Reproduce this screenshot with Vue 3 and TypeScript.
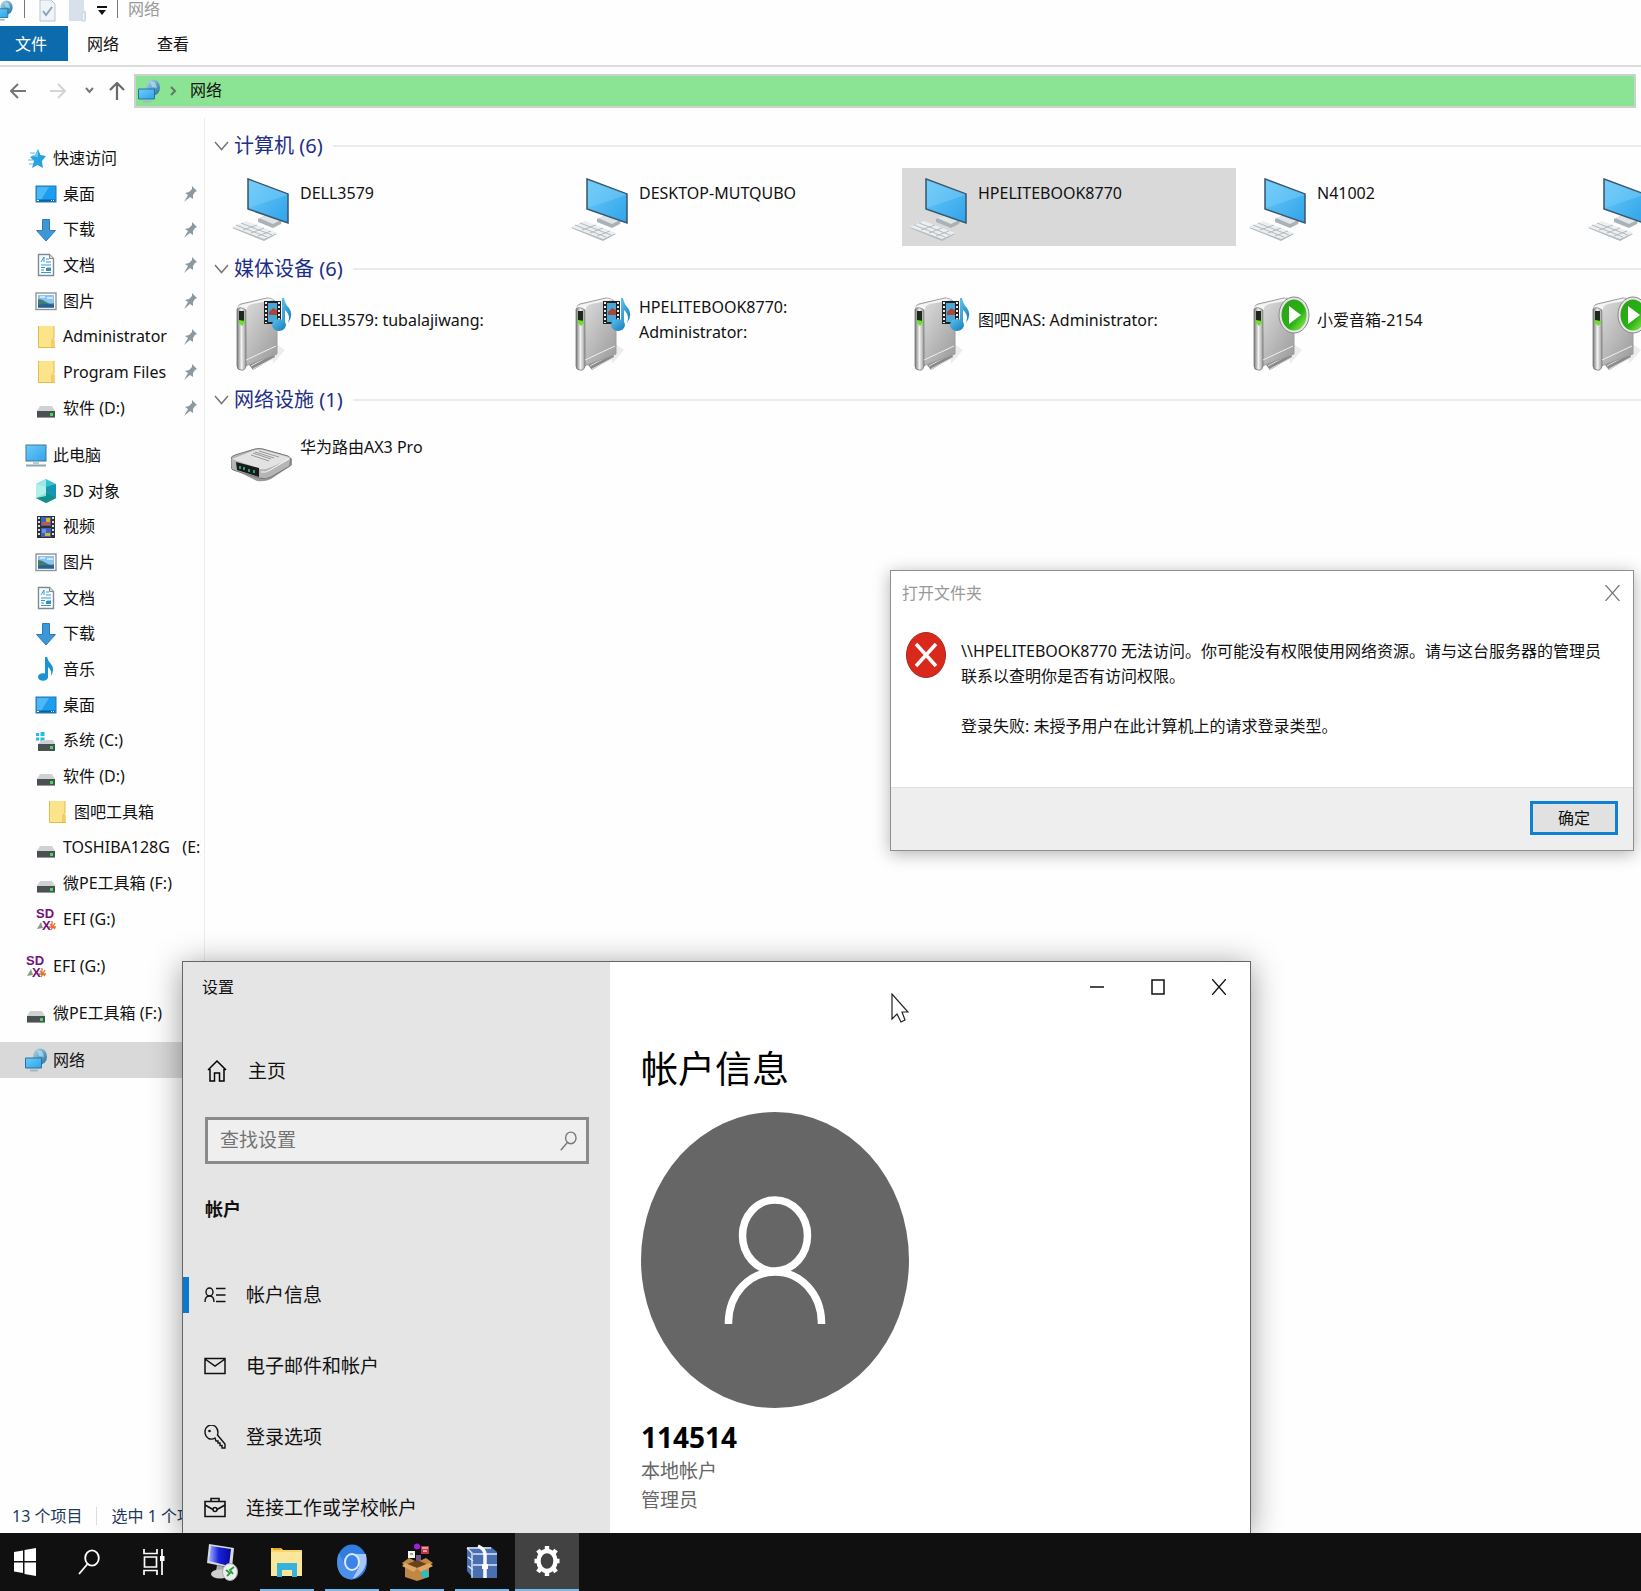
<script setup lang="ts">
import { ref } from 'vue'

interface TreeItem { icon: string; label: string; level: number; pinned?: boolean; active?: boolean }
interface Tile { icon: string; lines: string[]; selected?: boolean }
interface Group { title: string; tiles: Tile[] }
interface MenuItem { icon: string; label: string; active?: boolean }
interface TaskApp { icon: string; label: string; state: '' | 'running' | 'active' }

const tree: TreeItem[][] = [
  [
    { icon: 'star', label: '快速访问', level: 0 },
    { icon: 'desktop', label: '桌面', level: 1, pinned: true },
    { icon: 'download', label: '下载', level: 1, pinned: true },
    { icon: 'document', label: '文档', level: 1, pinned: true },
    { icon: 'picture', label: '图片', level: 1, pinned: true },
    { icon: 'folder', label: 'Administrator', level: 1, pinned: true },
    { icon: 'folder', label: 'Program Files', level: 1, pinned: true },
    { icon: 'drive', label: '软件 (D:)', level: 1, pinned: true },
  ],
  [
    { icon: 'computer', label: '此电脑', level: 0 },
    { icon: 'cube', label: '3D 对象', level: 1 },
    { icon: 'video', label: '视频', level: 1 },
    { icon: 'picture', label: '图片', level: 1 },
    { icon: 'document', label: '文档', level: 1 },
    { icon: 'download', label: '下载', level: 1 },
    { icon: 'music', label: '音乐', level: 1 },
    { icon: 'desktop', label: '桌面', level: 1 },
    { icon: 'system', label: '系统 (C:)', level: 1 },
    { icon: 'drive', label: '软件 (D:)', level: 1 },
    { icon: 'folder', label: '图吧工具箱', level: 2 },
    { icon: 'drive', label: 'TOSHIBA128G   (E:)', level: 1 },
    { icon: 'drive', label: '微PE工具箱 (F:)', level: 1 },
    { icon: 'sd', label: 'EFI (G:)', level: 1 },
  ],
  [{ icon: 'sd', label: 'EFI (G:)', level: 0 }],
  [{ icon: 'drive', label: '微PE工具箱 (F:)', level: 0 }],
  [{ icon: 'network', label: '网络', level: 0, active: true }],
]

const groups: Group[] = [
  {
    title: '计算机 (6)',
    tiles: [
      { icon: 'tile-pc', lines: ['DELL3579'] },
      { icon: 'tile-pc', lines: ['DESKTOP-MUTQUBO'] },
      { icon: 'tile-pc', lines: ['HPELITEBOOK8770'], selected: true },
      { icon: 'tile-pc', lines: ['N41002'] },
      { icon: 'tile-pc', lines: [] },
    ],
  },
  {
    title: '媒体设备 (6)',
    tiles: [
      { icon: 'tile-media', lines: ['DELL3579: tubalajiwang:'] },
      { icon: 'tile-media', lines: ['HPELITEBOOK8770:', 'Administrator:'] },
      { icon: 'tile-media', lines: ['图吧NAS: Administrator:'] },
      { icon: 'tile-play', lines: ['小爱音箱-2154'] },
      { icon: 'tile-play', lines: [] },
    ],
  },
  { title: '网络设施 (1)', tiles: [{ icon: 'tile-router', lines: ['华为路由AX3 Pro'] }] },
]

const menu: MenuItem[] = [
  { icon: 'account', label: '帐户信息', active: true },
  { icon: 'mail', label: '电子邮件和帐户' },
  { icon: 'key', label: '登录选项' },
  { icon: 'briefcase', label: '连接工作或学校帐户' },
]

const apps: TaskApp[] = [
  { icon: 'remote', label: '远程桌面', state: '' },
  { icon: 'explorer', label: '文件资源管理器', state: 'running' },
  { icon: 'chromium', label: 'Chromium', state: 'running' },
  { icon: 'toolbox', label: '图吧工具箱', state: 'running' },
  { icon: 'archive', label: '压缩', state: 'running' },
  { icon: 'gear', label: '设置', state: 'active' },
]

const query = ref('')
</script>

<template>
  <svg class="sprite" aria-hidden="true">
    <defs>
      <linearGradient id="g-screen" x1="0" y1="0" x2="1" y2="1"><stop offset="0" stop-color="#6fcbf7" /><stop offset="1" stop-color="#2ea3ea" /></linearGradient>
      <linearGradient id="g-globe" x1="0" y1="0" x2="1" y2="1"><stop offset="0" stop-color="#b5dcec" /><stop offset="1" stop-color="#1d6f9f" /></linearGradient>
      <linearGradient id="g-metal" x1="0" y1="0" x2="1" y2="1"><stop offset="0" stop-color="#e4e4e4" /><stop offset="1" stop-color="#989898" /></linearGradient>
      <linearGradient id="g-edge" x1="0" y1="0" x2="1" y2="0"><stop offset="0" stop-color="#777" /><stop offset=".5" stop-color="#f2f2f2" /><stop offset="1" stop-color="#999" /></linearGradient>
      <linearGradient id="g-green" x1="0" y1="0" x2="1" y2="1"><stop offset="0" stop-color="#2f9e1c" /><stop offset=".6" stop-color="#27b312" /><stop offset="1" stop-color="#a3f25c" /></linearGradient>
      <linearGradient id="g-note" x1="0" y1="0" x2="1" y2="1"><stop offset="0" stop-color="#5cc3ee" /><stop offset="1" stop-color="#1479b8" /></linearGradient>
      <linearGradient id="g-crt" x1="0" y1="0" x2="1" y2="0"><stop offset="0" stop-color="#9fb4ff" /><stop offset=".45" stop-color="#1a22d8" /><stop offset="1" stop-color="#0508a0" /></linearGradient>
    </defs>
    <symbol id="star" viewBox="0 0 22 24"><path d="M13 3l2.500 6 5.500 1-4 5 1 7-5.500-3-5.500 3 2-7-4-4 5-2z" fill="#2aa3dd" /><path d="M13 3l0 8-7-1 4-1z" fill="#6bcaf0" /><path d="M5 7h5M3 14h5M4 18h4" stroke="#63b9e2" /></symbol>
    <symbol id="desktop" viewBox="0 0 22 24"><rect x="1" y="4" width="20" height="16" fill="#1c9ef0" stroke="#2277ad" /><path d="M2 5h12L6 18H2z" fill="#4db7f8" /><path d="M2 18.500h18" stroke="#0e5f9c" stroke-width="2" /><path d="M2 18.500h2M16 18.500h1M18 18.500h1" stroke="#fff" /></symbol>
    <symbol id="download" viewBox="0 0 22 24"><path d="M7.500 1.500h7v11h6L11 23 1.500 12.500h6z" fill="#3c96d8" stroke="#2b7cb8" /></symbol>
    <symbol id="document" viewBox="0 0 22 24"><path d="M3.500 1.500h11l4 4v17h-15z" fill="#fff" stroke="#7e8a90" stroke-width="1.400" /><path d="M14.500 1.500v4h4" fill="#ddd" stroke="#7e8a90" /><path d="M6 9l3-5v5M11 6h3M11 9h5M6 12h10M6 14.500h4M12 15h4M6 17h3M6 19.500h10" stroke="#2a9ad6" fill="none" /><path d="M11 15h5v3h-5z" fill="#3e8bb0" /></symbol>
    <symbol id="picture" viewBox="0 0 22 24"><rect x="1" y="4" width="20" height="16.500" fill="#fff" stroke="#8b9499" stroke-width="1.400" /><rect x="3" y="6" width="16" height="12.500" fill="#8cc4f0" /><path d="M3 10q4 0 8 3t8 1v4.500H3z" fill="#3f7d72" /><path d="M3 16q8-2 16 0v2.500H3z" fill="#2c5e96" /><path d="M5 8h5M12 9h6" stroke="#dff0fc" stroke-width="1.500" /></symbol>
    <symbol id="folder" viewBox="0 0 22 24"><path d="M3 1h16v13h1v9H3z" fill="#fce48a" /><path d="M3.500 1v21.500H20M19 1v12q-2 1-2 3v6" stroke="#e2bb48" fill="none" /><path d="M17.500 15h2v7h-2z" fill="#f3cf62" /></symbol>
    <symbol id="drive" viewBox="0 0 22 24"><path d="M5 10h12l3 5H2z" fill="#cfd2d2" /><rect x="2" y="15" width="18" height="7" fill="#4b5052" /><path d="M2 21.500h18" stroke="#999" /><rect x="15" y="17" width="3" height="3" fill="#3ee05a" /></symbol>
    <symbol id="system" viewBox="0 0 22 24"><path d="M1 4h3v3H1zM5.500 3h4v4h-4zM1 8.500h3v3H1zM5.500 8.500h4v4h-4z" fill="#21bce6" /><path d="M7 11h11l2 4H3z" fill="#cfd2d2" /><rect x="3" y="15" width="17" height="7" fill="#4b5052" /><rect x="15" y="17" width="3" height="3" fill="#3ee05a" /></symbol>
    <symbol id="computer" viewBox="0 0 22 24"><rect x="1" y="2" width="20" height="16" fill="url(#g-screen)" stroke="#3f7896" /><path d="M8 19h6v2H8z" fill="#b7cbd5" /><path d="M1 22.500h20" stroke="#8fa5b0" stroke-width="2" /></symbol>
    <symbol id="cube" viewBox="0 0 22 24"><path d="M11 0l10 5v14l-10 5L1 19V5z" fill="#35c3cc" /><path d="M11 0v14L1 19V5z" fill="#9be8ea" /><path d="M11 8l10-3v14l-10 5z" fill="#1796b4" /><path d="M1 19l10-5 10 5-10 5z" fill="#128f8b" /><path d="M1 5l10 3v9L1 19z" fill="#b8f1ea" opacity=".8" /></symbol>
    <symbol id="video" viewBox="0 0 22 24"><rect x="2" y="1" width="18" height="22" fill="#303030" /><path d="M4 2v20M18 2v20" stroke="#ddd" stroke-width="2" stroke-dasharray="2 2" /><path d="M6 2h10v9H6zM6 13h10v9H6z" fill="#3d62c4" /><path d="M7 7h8v3H7z" fill="#c65a3a" /><path d="M11 3h4v4h-4zM10 18h5v3h-5z" fill="#d3b630" /><path d="M7 14h4v4H7z" fill="#6a92ea" /></symbol>
    <symbol id="music" viewBox="0 0 22 24"><ellipse cx="8" cy="20" rx="5" ry="3.800" fill="#1b93d3" /><path d="M10 0h2q1 4 4 7 4 5 0 12 1-6-3-9v11h-3z" fill="#1b93d3" /></symbol>
    <symbol id="network" viewBox="0 0 22 24"><ellipse cx="15" cy="8.500" rx="7" ry="8" fill="url(#g-globe)" /><path d="M12 2l5 1 2 6-5-1z" fill="#b7dff0" opacity=".7" /><path d="M.500 10h16v10H.500z" fill="url(#g-screen)" stroke="#2773a5" /><path d="M5 21.500h8v2H5z" fill="#a9b7bf" /></symbol>
    <symbol id="pin" viewBox="0 0 14 16"><path d="M9 0l5 5-2 1-2 3v4l-3-2-6 5 4-7-3-2 4-1 3-3z" fill="#8b9aa0" /></symbol>

    <symbol id="tile-pc" viewBox="0 0 62 78"><path d="M27 51l9-4 15 5-1 4-8 4-15-6z" fill="#aab2b7" /><path d="M28 50l9-3 13 5-8 4z" fill="#dfe4e6" /><path d="M39 46l5 2v5l-5-2z" fill="#d9dfe2" /><path d="M17 11l40 15v29L17 41z" fill="url(#g-screen)" stroke="#39566a" stroke-width="1.500" /><path d="M18 40l38-13v-1L18 12z" fill="#7dd0fa" opacity=".45" /><path d="M1 60l14-6 31 12-13 7z" fill="#b4babd" /><path d="M1 59l14-6 31 12-13 6z" fill="#eceeef" /><path d="M5 57l31 12M10 55l31 12M12 62l14-5M20 65l13-5M27 68l13-5" stroke="#b4bbbf" stroke-width="1" /></symbol>
    <symbol id="tile-body" viewBox="0 0 62 82"><path d="M40 45l14 10-12 14z" fill="#000" opacity=".07" /><path d="M18 70l24-14 2 6-22 13z" fill="#8b8b8b" /><path d="M20 71l22-12M22 74l21-11" stroke="#e2e2e2" /><path d="M7 12q0-2 3-3l26-6q7 0 10 6v50L14 71z" fill="url(#g-metal)" stroke="#9c9c9c" /><path d="M16 13q1-3 5-4l22-4-3-1q-3-1-6 0l-24 6q-4 1-4 5v57q0 3 4 3 3 0 4-3z" fill="#f5f5f5" /><path d="M6 14q3-3 9 1v56q-1 5-5 4-4 0-4-4z" fill="url(#g-edge)" stroke="#777" stroke-width=".8" /><path d="M8 16h5v12H8z" fill="#1c2a1c" /><path d="M8 25l6 1v2l-3 3-3-3z" fill="#6fe02a" /><path d="M15 65l30-14" stroke="#eee" /></symbol>
    <symbol id="tile-media" viewBox="0 0 62 82"><use href="#tile-body" width="62" height="82" /><rect x="33" y="6" width="17" height="23" fill="#222" /><path d="M35 7v21M48 7v21" stroke="#eee" stroke-width="2" stroke-dasharray="2 2" /><rect x="37" y="8" width="9" height="19" fill="#49a8d8" /><path d="M38 17l4-4 4 2v5h-8z" fill="#a9473a" /><path d="M51 3h2q1 6 5 10 5 7-1 15 3-8-3-13v15h-3z" fill="url(#g-note)" /><ellipse cx="48" cy="30" rx="7" ry="6" fill="url(#g-note)" /></symbol>
    <symbol id="tile-play" viewBox="0 0 62 82"><use href="#tile-body" width="62" height="82" /><ellipse cx="46" cy="20" rx="15" ry="18" fill="#e6e6e6" stroke="#888" /><ellipse cx="46" cy="20" rx="12.500" ry="15.500" fill="url(#g-green)" /><path d="M41 11v18l12-9z" fill="#fff" /></symbol>
    <symbol id="tile-router" viewBox="0 0 62 78"><path d="M2 47l24 12q8 1 14-2l21-14v-7L40 48z" fill="#555" opacity=".6" /><path d="M0 37q0-3 4-4l20-6q4-1 8 0l25 7q4 2 2 7v3L40 55q-5 3-12 1L2 48q-2-1-2-4z" fill="#b5b5b5" stroke="#777" /><path d="M1 37l23-9q4-1 8 0l25 7q3 1 0 3L38 46q-4 2-9 1z" fill="#e2e2e2" /><path d="M5 40l23 6v9L6 48z" fill="#151b1e" /><path d="M9 44v3M13 45v3M18 47v3M23 48v3" stroke="#3ec96a" stroke-width="1.500" /><path d="M24 30l19 6M28 29l20 6M20 33l18 6M22 31l18 6" stroke="#999" /><path d="M30 50q5 1 9-2l19-11" stroke="#fafafa" fill="none" /></symbol>

    <symbol id="home" viewBox="0 0 22 24"><path d="M2 11l9-9 9 9M4 10v12h4.500v-8h5v8H18V10" fill="none" stroke="#000" stroke-width="1.500" /></symbol>
    <symbol id="account" viewBox="0 0 22 24"><ellipse cx="5.500" cy="9" rx="3.500" ry="4" fill="none" stroke="#111" stroke-width="1.400" /><path d="M1 19q0-6 4.500-6t4.500 6M12 5.500h9.500M12 12h9.500M12 18.500h9.500" fill="none" stroke="#111" stroke-width="1.400" /></symbol>
    <symbol id="mail" viewBox="0 0 22 24"><path d="M1 4.500h20v15H1zM1 5l10 7 10-7" fill="none" stroke="#111" stroke-width="1.500" /></symbol>
    <symbol id="key" viewBox="0 0 22 24"><path d="M11 13q-3 2-6.500.5Q1 11 1 7t3-6q4-2 7.500.5Q15 5 13.500 10L21 19v4h-3v-2.500h-2V18h-2v-2h-2z" fill="none" stroke="#111" stroke-width="1.400" /><circle cx="5.500" cy="6" r="1.300" fill="#111" /></symbol>
    <symbol id="briefcase" viewBox="0 0 22 24"><path d="M1 5.500h20v15H1zM7 5V2.500h8V5M1 9l8 4.500M21 9l-8 4.500" fill="none" stroke="#111" stroke-width="1.600" /><circle cx="11" cy="13.500" r="2" fill="none" stroke="#111" stroke-width="1.500" /></symbol>
    <symbol id="search" viewBox="0 0 22 26"><ellipse cx="14" cy="9" rx="6.800" ry="7.600" fill="none" stroke="currentColor" stroke-width="1.800" /><path d="M9.500 15L1 25" stroke="currentColor" stroke-width="1.800" /></symbol>

    <symbol id="start" viewBox="0 0 22 28"><path d="M0 4l9-1.500V13H0zM10.500 2L22 0v13H10.500zM0 14.500h9V25l-9-1.500zM10.500 14.500H22V28l-11.500-2z" fill="#fff" /></symbol>
    <symbol id="taskview" viewBox="0 0 22 26"><path d="M1 0v4.500h13V0M1 26v-4.500h13V26M1.500 8h12v10h-12zM19 0v26" fill="none" stroke="#fff" stroke-width="1.700" /><path d="M17 7h4.500v5H17z" fill="#fff" /></symbol>
    <symbol id="remote" viewBox="0 0 34 38"><path d="M4 1l25 4-2 20L2 20z" fill="#d6d9df" /><path d="M6 3l20 3-2 17-20-5z" fill="url(#g-crt)" /><path d="M12 22l8 2v6l-9-2z" fill="#a9a9a9" /><ellipse cx="15" cy="31" rx="9" ry="4.500" fill="#cfcfcf" /><ellipse cx="25" cy="29" rx="7.500" ry="8.500" fill="#eee" stroke="#aaa" /><path d="M21 27l4 3-3 3M29 24l-4 3 3 4" stroke="#239f3c" stroke-width="1.800" fill="none" /></symbol>
    <symbol id="explorer" viewBox="0 0 34 38"><path d="M1 5h10l2 2h19v26H1z" fill="#f7d66a" /><path d="M1 9h31v24H1z" fill="#fbe79a" /><path d="M3 6h8" stroke="#e9a82d" stroke-width="2" /><path d="M7 20h20v14h-5v-7H12v7H7z" fill="#35b3dc" /></symbol>
    <symbol id="chromium" viewBox="0 0 34 38"><ellipse cx="17" cy="19" rx="15" ry="17.500" fill="#2f7de0" /><path d="M17 11h14q2 11-4 18-5 6-10 7l7-12z" fill="#a5c6f7" /><path d="M4 10l7 14q4 5 11 3l-5 9.500Q5 36 2.500 24 1.500 15 4 10z" fill="#4d8fe8" /><ellipse cx="17" cy="19" rx="8" ry="9" fill="#dceaff" /><ellipse cx="17" cy="19" rx="6" ry="7" fill="#3b83e4" /></symbol>
    <symbol id="toolbox" viewBox="0 0 34 38"><circle cx="17" cy="3.500" r="3" fill="#a020d8" /><path d="M21 3h8v8h-8z" fill="#b83a48" /><path d="M22 5h6M23 8h4" stroke="#fff" /><path d="M8 8h7v7H8z" fill="#f4f4f4" /><path d="M10 11h3" stroke="#555" /><path d="M16 12h5v6h-5z" fill="#715591" /><path d="M2 20l7-5 8 4 9-4 7 5-4 3v11l-12 4-12-4V23z" fill="#bf8845" /><path d="M5 22l12 3 12-3-12-5z" fill="#67421c" /><path d="M17 25l-3 4-12-6 3-3zM17 25l4 4 12-6-4-3z" fill="#dfa860" /><circle cx="25" cy="31" r="3.800" fill="#25bfc4" /></symbol>
    <symbol id="archive" viewBox="0 0 34 38"><path d="M2 4h24l6 5v26H8l-6-7z" fill="#4a6fb0" /><path d="M2 5l5 5v25M8 11h24M8 22h24M3 14l5 4M3 23l5 4M2 5h24" stroke="#dce6f7" stroke-width="1.400" fill="none" /><path d="M13 3q7 3 7 9v23" stroke="#f8fbff" stroke-width="3.500" fill="none" /><path d="M17 21h6v5h-6z" fill="#fff" /></symbol>
    <symbol id="gear" viewBox="0 0 34 38"><ellipse cx="17" cy="19" rx="8.500" ry="10" fill="none" stroke="#fff" stroke-width="4.400" /><path d="M17 4v5M17 29v5M4.500 19h4M25.500 19h4M8 8l3.500 5M22.500 25l3.500 5M26 8l-3.500 5M11.500 25L8 30" stroke="#fff" stroke-width="4.400" /></symbol>
  </svg>

  <div class="screen">
    <div class="desktop">
      <section class="explorer">
        <header class="quickbar">
          <svg class="qb-net"><use href="#network" /></svg>
          <i class="bar"></i>
          <svg class="qb-doc" viewBox="0 0 17 22"><path d="M1 0h11l4 4v17H1z" fill="#f0f4f8" stroke="#b9c5d3" /><path d="M4 11l3 4 6-8" fill="none" stroke="#8ea3bd" stroke-width="2" /></svg>
          <svg class="qb-dir" viewBox="0 0 17 22"><path d="M0 0h15v12h2v9H0z" fill="#d8e1eb" /><path d="M13 21v-8l3-2v10z" fill="#eef2f6" stroke="#c3cfdc" /></svg>
          <svg class="qb-drop" viewBox="0 0 10 10"><path d="M0 1h10" stroke="#111" stroke-width="2" /><path d="M1 4h8L5 9z" fill="#111" /></svg>
          <i class="bar"></i>
          <span class="qb-title">网络</span>
        </header>
        <nav class="ribbon">
          <button class="tab file" type="button">文件</button>
          <button class="tab" type="button">网络</button>
          <button class="tab" type="button">查看</button>
        </nav>
        <div class="addressbar">
          <button type="button" class="nav-btn back" aria-label="返回"><svg viewBox="0 0 16 16"><path d="M16 8H1M8 1L1 8l7 7" fill="none" stroke="#777" stroke-width="2" /></svg></button>
          <button type="button" class="nav-btn" aria-label="前进"><svg viewBox="0 0 16 16"><path d="M0 8h15M8 1l7 7-7 7" fill="none" stroke="#d5d5d5" stroke-width="2" /></svg></button>
          <button type="button" class="nav-btn recent" aria-label="最近"><svg viewBox="0 0 9 16"><path d="M1 5l3.500 4L8 5" fill="none" stroke="#777" stroke-width="2" /></svg></button>
          <button type="button" class="nav-btn up" aria-label="向上"><svg viewBox="0 0 16 18"><path d="M8 18V2M1 8l7-7 7 7" fill="none" stroke="#6a6a6a" stroke-width="2.200" /></svg></button>
          <div class="address">
            <svg class="addr-icon"><use href="#network" /></svg>
            <svg class="addr-chev" viewBox="0 0 8 12"><path d="M1 2l4 4-4 4" fill="none" stroke="#5e7a62" stroke-width="2" /></svg>
            <span>网络</span>
          </div>
        </div>

        <div class="body">
          <nav class="tree">
            <ul v-for="(group, g) in tree" :key="g">
              <li v-for="(item, i) in group" :key="i">
                <a href="#" :class="['node', 'level-' + item.level, { active: item.active }]">
                  <svg v-if="item.icon === 'sd'" class="node-icon sd" viewBox="0 0 22 24">
                    <path d="M2 22l4-7 2 6z" fill="#8c9a8c" /><path d="M15 17l5 5M20 16l-4 7M14 20h7M17 14v8" stroke="#e0702c" stroke-width="1.300" />
                    <text x="1" y="11">SD</text><text x="7" y="23">X</text>
                  </svg>
                  <svg v-else class="node-icon"><use :href="'#' + item.icon" /></svg>
                  <span>{{ item.label }}</span>
                  <svg v-if="item.pinned" class="pin"><use href="#pin" /></svg>
                </a>
              </li>
            </ul>
          </nav>
          <main class="content">
            <section v-for="group in groups" :key="group.title" class="group">
              <h2><svg viewBox="0 0 15 10"><path d="M1 1l6.500 7.500L14 1" fill="none" stroke="#777" stroke-width="1.500" /></svg>{{ group.title }}</h2>
              <div class="tiles">
                <button v-for="(tile, t) in group.tiles" :key="t" type="button" :class="['tile', tile.icon, { selected: tile.selected }]">
                  <svg class="tile-icon"><use :href="'#' + tile.icon" /></svg>
                  <span class="tile-text"><span v-for="line in tile.lines" :key="line">{{ line }}</span></span>
                </button>
              </div>
            </section>
          </main>
        </div>
        <footer class="status"><span>13 个项目</span><i></i><span>选中 1 个项目</span></footer>
      </section>

      <section class="dialog" role="alertdialog">
        <header>
          <span>打开文件夹</span>
          <button type="button" aria-label="关闭"><svg viewBox="0 0 14 16"><path d="M0 0l14 16M14 0L0 16" stroke="#777" stroke-width="1.200" /></svg></button>
        </header>
        <div class="dialog-body">
          <svg viewBox="0 0 40 46"><ellipse cx="20" cy="23" rx="19.500" ry="22.500" fill="#d9291c" stroke="#a8261e" /><path d="M10 12l20 22M30 12L10 34" stroke="#fff" stroke-width="3.500" /></svg>
          <div>
            <p>\\HPELITEBOOK8770 无法访问。你可能没有权限使用网络资源。请与这台服务器的管理员<br>联系以查明你是否有访问权限。</p>
            <p>登录失败: 未授予用户在此计算机上的请求登录类型。</p>
          </div>
        </div>
        <footer><button type="button">确定</button></footer>
      </section>

      <section class="settings">
        <aside>
          <div class="settings-title">设置</div>
          <a href="#" class="home"><svg><use href="#home" /></svg>主页</a>
          <label class="search">
            <input v-model="query" type="text" placeholder="查找设置" aria-label="查找设置">
            <svg><use href="#search" /></svg>
          </label>
          <h3>帐户</h3>
          <a v-for="item in menu" :key="item.label" href="#" :class="['menu-item', { active: item.active }]">
            <svg><use :href="'#' + item.icon" /></svg>{{ item.label }}
          </a>
        </aside>
        <div class="pane">
          <div class="caption">
            <button type="button" aria-label="最小化"><svg viewBox="0 0 14 16"><path d="M0 8h14" stroke="#111" stroke-width="1.500" /></svg></button>
            <button type="button" aria-label="最大化"><svg viewBox="0 0 14 16"><path d="M1 1h12v14H1z" fill="none" stroke="#111" stroke-width="1.500" /></svg></button>
            <button type="button" aria-label="关闭"><svg viewBox="0 0 14 16"><path d="M0 0l14 16M14 0L0 16" stroke="#111" stroke-width="1.400" /></svg></button>
          </div>
          <div class="profile">
            <h1>帐户信息</h1>
            <svg class="avatar" viewBox="0 0 268 296"><ellipse cx="134" cy="148" rx="134" ry="148" fill="#666" /><ellipse cx="134" cy="123.500" rx="32.500" ry="35.500" fill="none" stroke="#fff" stroke-width="7.500" /><path d="M87.500 212v-2C88 182 108 160 134 160s46 22 46.500 50v2" fill="none" stroke="#fff" stroke-width="7.500" /></svg>
            <strong>114514</strong>
            <p>本地帐户</p>
            <p>管理员</p>
          </div>
        </div>
      </section>

      <svg class="cursor" viewBox="0 0 18 30"><path d="M1 1v25l5-5 4 8 4-2-3-8h6z" fill="#fff" stroke="#222" stroke-width="1.200" /></svg>
    </div>

    <footer class="taskbar">
      <button type="button" class="start" aria-label="开始"><svg><use href="#start" /></svg></button>
      <button type="button" aria-label="搜索"><svg><use href="#search" /></svg></button>
      <button type="button" aria-label="任务视图"><svg><use href="#taskview" /></svg></button>
      <div class="apps">
        <button v-for="app in apps" :key="app.icon" type="button" :class="app.state" :aria-label="app.label">
          <svg><use :href="'#' + app.icon" /></svg>
        </button>
      </div>
    </footer>
  </div>
</template>

<style>
body {
  margin: 0;
  background: #fff;
}
</style>

<style scoped>
* {
  box-sizing: border-box;
}
.sprite {
  position: absolute;
  width: 0;
  height: 0;
}
.screen {
  display: flex;
  flex-direction: column;
  min-height: 100vh;
  font-family: "Noto Sans", "Noto Sans CJK SC", sans-serif;
  font-size: 16px;
  line-height: 25px;
  color: #111;
}
button {
  padding: 0;
  border: 0;
  background: none;
  font: inherit;
  color: inherit;
}
a {
  color: inherit;
  text-decoration: none;
}
ul, h1, h2, h3, p {
  margin: 0;
  padding: 0;
  list-style: none;
}
svg {
  flex: none;
  display: block;
}
.desktop {
  position: relative;
  flex: 1;
  display: flex;
  overflow: hidden;
}
.explorer {
  flex: 1;
  min-width: 0;
  display: flex;
  flex-direction: column;
  background: #fefefe;
}

.quickbar {
  display: flex;
  align-items: flex-start;
  height: 26px;
}
.quickbar .bar {
  width: 1px;
  height: 18px;
  background: #777;
}
.qb-net {
  width: 22px;
  height: 21px;
  margin: 0 10px 0 -8px;
}
.qb-doc {
  width: 17px;
  height: 22px;
  margin: 0 13px 0 14px;
}
.qb-dir {
  width: 17px;
  height: 22px;
}
.qb-drop {
  width: 10px;
  height: 10px;
  margin: 6px 10px 0 11px;
}
.qb-title {
  margin-left: 10px;
  color: #999;
  line-height: 18px;
}

.ribbon {
  display: flex;
  height: 41px;
  border-bottom: 2px solid #dcdcdc;
}
.tab {
  width: 70px;
  height: 35px;
  padding-top: 2px;
}
.tab.file {
  width: 68px;
  padding-right: 6px;
  background: #0b6bad;
  color: #fff;
}

.addressbar {
  display: flex;
  align-items: center;
  height: 51px;
  padding: 0 5px 4px 10px;
}
.nav-btn svg {
  width: 16px;
  height: 18px;
}
.nav-btn.back {
  margin-right: 24px;
}
.nav-btn.recent {
  margin: 0 15px 0 19px;
}
.nav-btn.recent svg {
  width: 9px;
}
.nav-btn.up {
  margin-right: 9px;
}
.address {
  flex: 1;
  display: flex;
  align-items: center;
  height: 34px;
  padding-left: 2px;
  border: 2px solid #ccd2cc;
  background: #8be494;
}
.addr-icon {
  width: 22px;
  height: 24px;
}
.addr-chev {
  width: 8px;
  height: 12px;
  margin: 0 12px 0 10px;
}

.body {
  flex: 1;
  display: flex;
}
.tree {
  flex: none;
  width: 205px;
  padding-top: 22px;
  border-right: 1px solid #ececec;
}
.tree ul {
  width: 201px;
  margin-bottom: 11px;
}
.tree li {
  height: 36px;
}
.tree li:nth-child(3n) {
  height: 35px;
}
.node {
  display: flex;
  align-items: center;
  gap: 6px;
  height: 100%;
  overflow: hidden;
  white-space: pre;
}
.node.active {
  background: #d9d9d9;
}
.level-0 {
  padding-left: 25px;
}
.level-1 {
  padding-left: 35px;
}
.level-2 {
  padding-left: 46px;
}
.node-icon {
  width: 22px;
  height: 24px;
}
.sd text {
  fill: #75107b;
  font: 700 13px "Liberation Sans", sans-serif;
}
.pin {
  width: 14px;
  height: 16px;
  margin: 0 4px 0 auto;
}

.content {
  flex: 1;
  min-width: 0;
  overflow: hidden;
  padding-top: 13px;
}
.group {
  margin-bottom: 8px;
}
.group h2 {
  display: flex;
  align-items: center;
  gap: 5px;
  margin-bottom: 7px;
  padding-left: 9px;
  color: #1e2f87;
  font-size: 20px;
  font-weight: 400;
  line-height: 30px;
}
.group h2::after {
  content: "";
  flex: 1;
  height: 2px;
  margin-left: 5px;
  background: #ebebeb;
}
.group h2 svg {
  width: 15px;
  height: 10px;
}
.tiles {
  display: grid;
  grid-template-columns: repeat(5, 334px);
  gap: 5px;
  padding-left: 19px;
}
.tile {
  display: flex;
  align-items: flex-start;
  gap: 7px;
  padding-left: 7px;
  text-align: left;
}
.tile.selected {
  background: #d9d9d9;
}
.tile-icon {
  width: 62px;
  height: 78px;
}
.tile-media,
.tile-play {
  padding-top: 4px;
}
.tile-media .tile-icon,
.tile-play .tile-icon {
  height: 82px;
}
.tile-text {
  display: flex;
  flex-direction: column;
  justify-content: center;
  height: 50px;
}

.status {
  display: flex;
  align-items: center;
  gap: 14px;
  height: 34px;
  padding-left: 12px;
  color: #1e395b;
}
.status i {
  width: 1px;
  height: 18px;
  background: #ddd;
}

.dialog {
  position: absolute;
  top: 570px;
  right: 7px;
  width: 744px;
  border: 1px solid #8f8f8f;
  background: #fff;
  box-shadow: 0 3px 16px rgba(0, 0, 0, 0.3);
}
.dialog header {
  display: flex;
  align-items: center;
  justify-content: space-between;
  height: 44px;
  padding: 0 13px 0 11px;
  color: #999;
}
.dialog header svg {
  width: 15px;
  height: 16px;
}
.dialog-body {
  display: flex;
  gap: 15px;
  height: 172px;
  padding: 17px 0 0 15px;
}
.dialog-body svg {
  width: 40px;
  height: 46px;
}
.dialog-body p {
  margin-bottom: 25px;
  white-space: nowrap;
}
.dialog-body p:first-child {
  margin-top: 7px;
}
.dialog footer {
  display: flex;
  justify-content: flex-end;
  height: 63px;
  padding: 13px 15px 0;
  border-top: 1px solid #dfdfdf;
  background: #eee;
}
.dialog footer button {
  width: 88px;
  height: 34px;
  border: 3px solid #1080d0;
  background: #e1e1e1;
}

.settings {
  position: absolute;
  top: 961px;
  bottom: 0;
  left: 182px;
  display: flex;
  width: 1069px;
  overflow: hidden;
  border: 1px solid #666;
  border-bottom: 0;
  background: #fff;
  box-shadow: 0 4px 30px rgba(0, 0, 0, 0.4);
}
.settings aside {
  flex: none;
  width: 427px;
  background: #e5e5e5;
  font-size: 19px;
}
.settings-title {
  padding: 13px 0 0 19px;
  font-size: 16px;
}
.home {
  display: flex;
  align-items: center;
  gap: 20px;
  margin-top: 55px;
  padding-left: 23px;
  line-height: 32px;
}
.home svg,
.menu-item svg {
  width: 22px;
  height: 24px;
}
.search {
  display: flex;
  align-items: center;
  width: 384px;
  height: 47px;
  margin: 30px 0 0 22px;
  padding: 0 9px 0 12px;
  border: 3px solid #8a8a8a;
  background: #efefef;
  color: #777;
}
.search input {
  flex: 1;
  min-width: 0;
  padding: 0;
  border: 0;
  outline: 0;
  background: none;
  font: inherit;
}
.search input::placeholder {
  color: #737373;
  opacity: 1;
}
.search svg {
  width: 17px;
  height: 20px;
}
.settings h3 {
  margin: 29px 0 52px 22px;
  font-size: 18px;
  line-height: 32px;
}
.menu-item {
  display: flex;
  align-items: center;
  gap: 20px;
  height: 36px;
  margin-bottom: 35px;
  padding-left: 21px;
}
.menu-item.active {
  padding-left: 15px;
  border-left: 6px solid #0a78d0;
}
.pane {
  flex: 1;
}
.caption {
  display: flex;
  justify-content: flex-end;
  padding-right: 1px;
}
.caption button {
  display: flex;
  align-items: center;
  justify-content: center;
  width: 61px;
  height: 50px;
}
.caption svg {
  width: 14px;
  height: 16px;
}
.profile {
  padding: 32px 0 0 31px;
  color: #666;
}
.profile h1 {
  color: #000;
  font-size: 37px;
  font-weight: 400;
  line-height: 50px;
}
.avatar {
  width: 268px;
  height: 296px;
  margin: 18px 0 9px;
}
.profile strong {
  display: block;
  color: #000;
  font-size: 28px;
  line-height: 40px;
}
.profile p {
  font-size: 19px;
  line-height: 29px;
}
.cursor {
  position: absolute;
  top: 993px;
  left: 891px;
  width: 18px;
  height: 30px;
}

.taskbar {
  display: flex;
  gap: 1px;
  height: 58px;
  background: #101010;
  color: #fff;
}
.taskbar button {
  display: flex;
  align-items: center;
  justify-content: center;
  width: 64px;
  height: 58px;
}
.taskbar .start {
  width: 56px;
  padding-right: 6px;
}
.taskbar > button svg {
  width: 22px;
  height: 28px;
}
.apps {
  display: flex;
  gap: 1px;
  margin-left: 3px;
}
.apps svg {
  width: 34px;
  height: 38px;
}
.apps .running {
  background: linear-gradient(#76b9ed, #76b9ed) center bottom / 54px 2px no-repeat;
}
.apps .active {
  border-bottom: 2px solid #76b9ed;
  background: #424242;
}
</style>
